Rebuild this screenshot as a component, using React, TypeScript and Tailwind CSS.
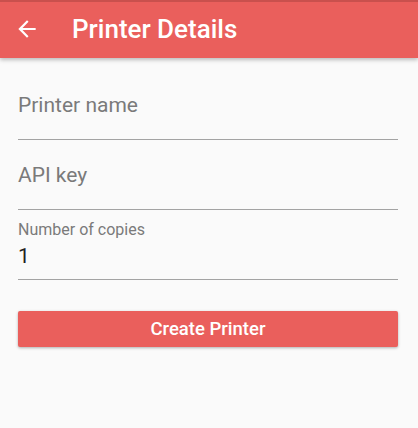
import React from "react";

function Field({ label, value }: { label?: string; value: string }) {
  if (label) {
    return (
      <div className="h-[70px] border-b border-[#a3a3a3] pt-[11px]">
        <div className="text-[16px] leading-[18px] text-[#7a7a7a]">{label}</div>
        <div className="mt-[5px] text-[21px] leading-[24px] text-[#222]">{value}</div>
      </div>
    );
  }
  return (
    <div className="h-[70px] border-b border-[#a3a3a3] pt-[23px]">
      <div className="text-[21px] leading-[24px] text-[#7a7a7a]">{value}</div>
    </div>
  );
}

export default function App() {
  return (
    <div className="w-[418px] h-[428px] bg-[#fafafa] font-['Roboto',sans-serif] overflow-hidden">
      {/* app bar */}
      <div className="relative h-[58px] bg-[#ea5f5c] shadow-[0_2px_4px_rgba(0,0,0,0.25)] flex items-center">
        <div className="absolute top-0 left-0 right-0 h-[2px] bg-[#c9504d]" />
        <svg
          viewBox="0 0 24 24"
          className="w-[26px] h-[26px] ml-[14px] fill-white"
        >
          <path d="M20 11H7.83l5.59-5.59L12 4l-8 8 8 8 1.41-1.41L7.83 13H20v-2z" />
        </svg>
        <h1 className="ml-[32px] text-[26px] leading-[30px] font-medium text-white">
          Printer Details
        </h1>
      </div>

      <div className="pt-[12px] pl-[18px] pr-[20px]">
        <Field value="Printer name" />
        <Field value="API key" />
        <Field label="Number of copies" value="1" />

        <button className="mt-[31px] w-full h-[36px] bg-[#ea5f5c] rounded-[2px] text-white text-[18.5px] leading-[36px] font-medium shadow-[0_1px_3px_rgba(0,0,0,0.3)]">
          Create Printer
        </button>
      </div>
    </div>
  );
}
